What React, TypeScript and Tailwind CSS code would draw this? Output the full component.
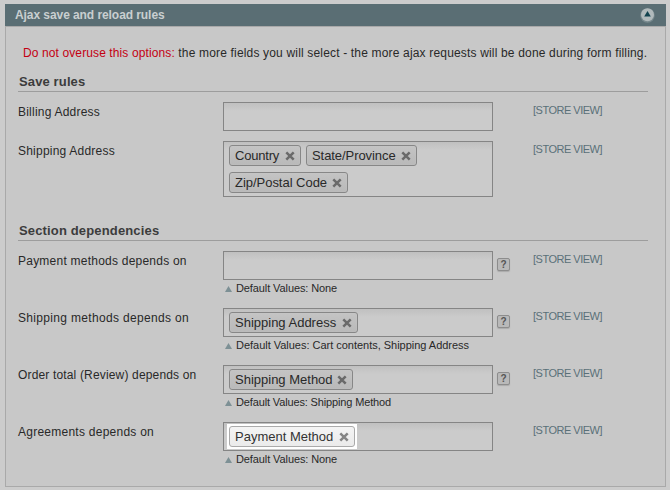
import React from "react";

function Tag({ label, width, lit = false, spacing = "" }: { label: string; width: string; lit?: boolean; spacing?: string }) {
  return (
    <span className={lit ? "-m-[2px] h-[25px] bg-white p-[2px]" : "h-[21px]"}>
      <span
        className={`flex h-[21px] shrink-0 items-center justify-between rounded-[3px] border pl-[5px] pr-[5px] text-[13px] leading-[19px] whitespace-nowrap ${width} ${
          lit
            ? "border-[#aaaaaa] bg-linear-to-b from-[#f4f4f4] to-[#ebebeb] text-[#333333]"
            : "border-[#878787] bg-linear-to-b from-[#c4c4c4] to-[#b9b9b9] text-[#292929] shadow-[inset_0_0_1px_#d0d0d0]"
        }`}
      >
        <span className={spacing}>{label}</span>
        <svg width="10" height="10" viewBox="0 0 10 10" className={lit ? "text-[#858585]" : "text-[#6a6a6a]"}>
          <path d="M1.3 1.3 8.7 8.7M8.7 1.3 1.3 8.7" stroke="currentColor" strokeWidth="2.5" fill="none" />
        </svg>
      </span>
    </span>
  );
}

function Row({
  label,
  labelSpacing = "",
  tall = false,
  help = false,
  note,
  noteSpacing = "",
  children,
}: {
  label: string;
  labelSpacing?: string;
  tall?: boolean;
  help?: boolean;
  note?: string;
  noteSpacing?: string;
  children?: React.ReactNode;
}) {
  return (
    <div className={`flex items-start ${note ? "h-[57px]" : tall ? "h-[66px]" : "h-[39px]"}`}>
      <div className={`w-[205px] shrink-0 pt-[2px] text-[12px] leading-4 whitespace-nowrap text-[#292929] ${labelSpacing}`}>{label}</div>
      <div className="w-[270px] shrink-0">
        <div
          className={`flex flex-wrap content-start gap-x-[5px] gap-y-[6px] border border-[#858585] bg-linear-to-b from-[#c0c0c0] to-[#cbcbcb] to-[8px] pt-[3px] pl-[5px] ${
            tall ? "h-[56px]" : "h-[29px]"
          }`}
        >
          {children}
        </div>
        {note && (
          <div className="flex h-4 items-center pl-[2px] text-[11px] leading-4 whitespace-nowrap text-[#292929]">
            <svg width="7" height="6" viewBox="0 0 7 6" className="mt-[2px] mr-[4px]">
              <path d="M3.5 0 7 6H0Z" fill="#7d9095" />
            </svg>
            <span className={noteSpacing}>{note}</span>
          </div>
        )}
      </div>
      <div className="w-[40px] shrink-0 pt-[7px] pl-[4px]">
        {help && (
          <div className="flex h-[13px] w-[13px] items-center justify-center rounded-[2px] border border-[#8d8d8d] bg-[#b9b9b9] text-[10px] leading-none font-bold text-[#555555] shadow-[0_1px_1px_#aaaaaa]">
            ?
          </div>
        )}
      </div>
      <div className="text-[11px] leading-4 tracking-[-0.5px] whitespace-nowrap text-[#5a7078]">[STORE VIEW]</div>
    </div>
  );
}

function Heading({ children, spacing }: { children: string; spacing: string }) {
  return (
    <h2 className={`h-[19px] border-b border-[#9d9d9d] pl-[1px] text-[13px] leading-[18px] font-bold text-[#3c3c3c] ${spacing}`}>
      {children}
    </h2>
  );
}

export default function App() {
  return (
    <main className="h-[490px] w-[670px] overflow-hidden bg-[#cccccc] pt-[4px] pl-[5px] font-['Liberation_Sans',Arial,sans-serif]">
      <header className="flex h-[22px] w-[661px] items-center justify-between bg-[#5a6e74] pr-[11px] pl-[10px]">
        <h1 className="text-[12px] leading-[22px] font-bold tracking-[-0.07px] text-[#c9cfd0]">Ajax save and reload rules</h1>
        <svg width="15" height="16" viewBox="0 0 15 16">
          <circle cx="7.5" cy="8.6" r="7.2" fill="#78898e" />
          <circle cx="7.5" cy="7.7" r="6.5" fill="#b1babc" />
          <path d="M7.5 4 10.8 9.5H4.2Z" fill="#12434f" />
        </svg>
      </header>
      <section className="h-[461px] w-[661px] border border-[#a9a9a9] bg-[#c8c8c8] pr-[17px] pl-[12px]">
        <p className="mt-[18px] h-[16px] pl-[5px] text-[12px] leading-4 tracking-[0.17px] whitespace-nowrap text-[#292929]">
          <span className="tracking-[0.11px] text-[#c40012]">Do not overuse this options:</span> the more fields you will select - the more ajax requests will be done during form filling.
        </p>
        <div className="mt-[12px]">
          <Heading spacing="tracking-[0.13px]">Save rules</Heading>
        </div>
        <div className="pt-[10px]">
          <Row label="Billing Address" labelSpacing="tracking-[0.22px]" />
          <Row label="Shipping Address" labelSpacing="tracking-[0.22px]" tall>
            <Tag label="Country" width="w-[72px]" spacing="tracking-[-0.2px]" />
            <Tag label="State/Province" width="w-[111px]" spacing="tracking-[-0.07px]" />
            <Tag label="Zip/Postal Code" width="w-[119px]" spacing="tracking-[-0.03px]" />
          </Row>
        </div>
        <div className="mt-[15px]">
          <Heading spacing="tracking-[0.15px]">Section dependencies</Heading>
        </div>
        <div className="pt-[10px]">
          <Row label="Payment methods depends on" labelSpacing="tracking-[0.23px]" help note="Default Values: None" noteSpacing="tracking-[-0.1px]" />
          <Row label="Shipping methods depends on" labelSpacing="tracking-[0.33px]" help note="Default Values: Cart contents, Shipping Address" noteSpacing="tracking-[-0.02px]">
            <Tag label="Shipping Address" width="w-[129px]" />
          </Row>
          <Row label="Order total (Review) depends on" labelSpacing="tracking-[0.16px]" help note="Default Values: Shipping Method" noteSpacing="tracking-[-0.14px]">
            <Tag label="Shipping Method" width="w-[124px]" />
          </Row>
          <Row label="Agreements depends on" labelSpacing="tracking-[0.25px]" note="Default Values: None" noteSpacing="tracking-[-0.1px]">
            <Tag label="Payment Method" width="w-[126px]" lit />
          </Row>
        </div>
      </section>
    </main>
  );
}
